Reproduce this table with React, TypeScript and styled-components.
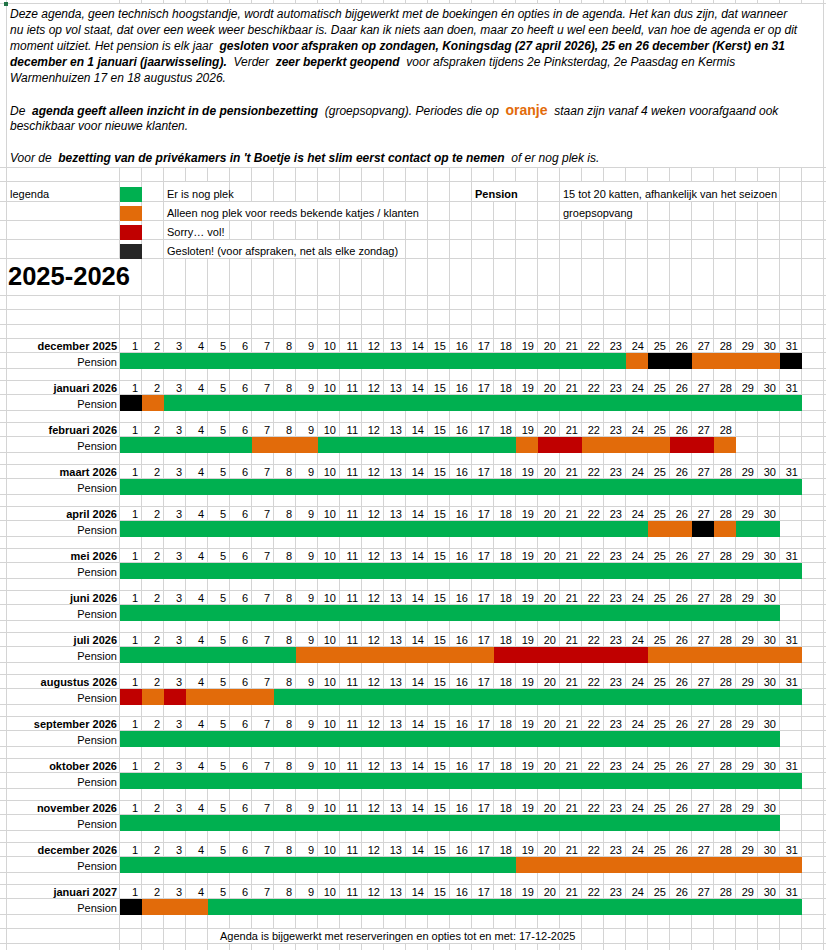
import React from "react";
import styled, { createGlobalStyle } from "styled-components";

const GRID = "#d4d4d4";
const COLS = "7px 113px repeat(33, 22px)";
const LAST_COL = 35;

const COLORS: Record<string, string> = {
  g: "#00b050",
  o: "#e26b0a",
  r: "#c00000",
  k: "#000000",
};

const Global = createGlobalStyle`
  html, body { margin: 0; padding: 0; background: #ffffff; }
  body { font-family: "Liberation Sans", Arial, sans-serif; color: #000; }
`;

const Sheet = styled.div`
  position: relative;
  width: 826px;
  height: 950px;
  overflow: hidden;
  background: #ffffff;
`;

const Marker = styled.div`
  position: absolute;
  left: 4px;
  top: 2px;
  width: 4px;
  height: 4px;
  background: #217346;
`;

const Row = styled.div<{ $h: number }>`
  display: grid;
  grid-template-columns: ${COLS};
  width: 846px;
  height: ${(p) => p.$h}px;
`;

const Cell = styled.div<{ $col?: number; $span?: number }>`
  box-sizing: border-box;
  min-width: 0;
  border-right: 1px solid ${GRID};
  border-bottom: 1px solid ${GRID};
  display: flex;
  align-items: flex-end;
  font-size: 11px;
  line-height: 11px;
  white-space: nowrap;
  ${(p) => (p.$col ? `grid-column: ${p.$col} / span ${p.$span ?? 1};` : "")}
`;

const TextBox = styled.div`
  grid-column: 2 / span 33;
  box-sizing: border-box;
  border-right: 1px solid ${GRID};
  border-bottom: 1px solid ${GRID};
  padding: 2px 0 0 3px;
  font-size: 12px;
  font-style: italic;
  line-height: 16px;
`;

const TextLine = styled.div`
  height: 16px;
  white-space: pre;
`;

const Strong = styled.span`
  font-weight: bold;
`;

const OrangeWord = styled.span`
  font-weight: bold;
  font-style: normal;
  font-size: 14px;
  color: #e26b0a;
`;

const LegendText = styled(Cell)<{ $bold?: boolean }>`
  padding: 0 0 1px 3px;
  font-weight: ${(p) => (p.$bold ? "bold" : "normal")};
`;

const SwatchCell = styled(Cell)`
  align-items: flex-end;
`;

const SwatchFill = styled.div<{ $color: string }>`
  width: calc(100% + 1px);
  height: 15px;
  margin: 0 -1px -1px 0;
  background: ${(p) => p.$color};
`;

const TitleCell = styled(Cell)`
  grid-column: 2 / span 2;
  font-size: 25.5px;
  font-weight: bold;
  line-height: 1;
  padding: 0 0 6px 1px;
`;

const LabelCell = styled(Cell)<{ $bold?: boolean }>`
  justify-content: flex-end;
  padding-right: 2px;
  font-weight: ${(p) => (p.$bold ? "bold" : "normal")};
`;

const DayCell = styled(Cell)`
  justify-content: flex-end;
  padding-right: 3px;
`;

const Segment = styled.div<{ $color: string; $col: number; $span: number }>`
  grid-column: ${(p) => p.$col} / span ${(p) => p.$span};
  background: ${(p) => p.$color};
`;

const FooterText = styled(Cell)`
  padding: 0 0 1px 12px;
`;

function blanks(from: number, to: number, prefix: string) {
  const out: React.ReactNode[] = [];
  for (let c = from; c <= to; c++) out.push(<Cell key={`${prefix}-${c}`} $col={c} />);
  return out;
}

type Seg = [string, number];
type Month = { name: string; days: number; segs: Seg[] };

const MONTHS: Month[] = [
  { name: "december 2025", days: 31, segs: [["g", 23], ["o", 1], ["k", 2], ["o", 4], ["k", 1]] },
  { name: "januari 2026", days: 31, segs: [["k", 1], ["o", 1], ["g", 29]] },
  { name: "februari 2026", days: 28, segs: [["g", 6], ["o", 3], ["g", 9], ["o", 1], ["r", 2], ["o", 4], ["r", 2], ["o", 1]] },
  { name: "maart 2026", days: 31, segs: [["g", 31]] },
  { name: "april 2026", days: 30, segs: [["g", 24], ["o", 2], ["k", 1], ["o", 1], ["g", 2]] },
  { name: "mei 2026", days: 31, segs: [["g", 31]] },
  { name: "juni 2026", days: 30, segs: [["g", 30]] },
  { name: "juli 2026", days: 31, segs: [["g", 8], ["o", 9], ["r", 7], ["o", 7]] },
  { name: "augustus 2026", days: 31, segs: [["r", 1], ["o", 1], ["r", 1], ["o", 4], ["g", 24]] },
  { name: "september 2026", days: 30, segs: [["g", 30]] },
  { name: "oktober 2026", days: 31, segs: [["g", 31]] },
  { name: "november 2026", days: 30, segs: [["g", 30]] },
  { name: "december 2026", days: 31, segs: [["g", 18], ["o", 13]] },
  { name: "januari 2027", days: 31, segs: [["k", 1], ["o", 3], ["g", 27]] },
];

type LegendItem = {
  color: string;
  label?: string;
  text: string;
  span: number;
  extra?: { bold?: string; boldSpan?: number; text: string; span: number };
};

const LEGEND: { h: number; item: LegendItem }[] = [
  {
    h: 19.5,
    item: {
      color: "#00b050",
      label: "legenda",
      text: "Er is nog plek",
      span: 3,
      extra: { bold: "Pension", boldSpan: 3, text: "15 tot 20 katten, afhankelijk van het seizoen", span: 10 },
    },
  },
  {
    h: 19,
    item: {
      color: "#e26b0a",
      text: "Alleen nog plek voor reeds bekende katjes / klanten",
      span: 12,
      extra: { text: "groepsopvang", span: 4 },
    },
  },
  { h: 19.5, item: { color: "#c00000", text: "Sorry… vol!", span: 3 } },
  { h: 19, item: { color: "#262626", text: "Gesloten! (voor afspraken, net als elke zondag)", span: 11 } },
];

function LegendRow({ h, item, idx }: { h: number; item: LegendItem; idx: number }) {
  const k = `lg${idx}`;
  const textEnd = 5 + item.span - 1;
  const cells: React.ReactNode[] = [];
  cells.push(<Cell key={`${k}-a`} $col={1} />);
  cells.push(
    <LegendText key={`${k}-b`} $col={2}>
      {item.label ?? ""}
    </LegendText>
  );
  cells.push(
    <SwatchCell key={`${k}-c`} $col={3}>
      <SwatchFill $color={item.color} />
    </SwatchCell>
  );
  cells.push(<Cell key={`${k}-d`} $col={4} />);
  cells.push(
    <LegendText key={`${k}-t`} $col={5} $span={item.span}>
      {item.text}
    </LegendText>
  );
  if (item.extra) {
    const ex = item.extra;
    cells.push(...blanks(textEnd + 1, 18, k));
    if (ex.bold) {
      cells.push(
        <LegendText key={`${k}-pb`} $col={19} $span={ex.boldSpan} $bold>
          {ex.bold}
        </LegendText>
      );
      cells.push(...blanks(19 + (ex.boldSpan ?? 1), 22, `${k}z`));
    } else {
      cells.push(...blanks(19, 22, `${k}x`));
    }
    cells.push(
      <LegendText key={`${k}-e`} $col={23} $span={ex.span}>
        {ex.text}
      </LegendText>
    );
    cells.push(...blanks(23 + ex.span, LAST_COL, `${k}y`));
  } else {
    cells.push(...blanks(textEnd + 1, LAST_COL, k));
  }
  return <Row $h={h}>{cells}</Row>;
}

function MonthBlock({ m, idx, last }: { m: Month; idx: number; last: boolean }) {
  const k = `m${idx}`;
  const days: React.ReactNode[] = [];
  for (let d = 1; d <= m.days; d++) {
    days.push(
      <DayCell key={`${k}-d${d}`} $col={2 + d}>
        {d}
      </DayCell>
    );
  }
  let col = 3;
  const segs = m.segs.map(([c, n], i) => {
    const el = <Segment key={`${k}-s${i}`} $color={COLORS[c]} $col={col} $span={n} />;
    col += n;
    return el;
  });
  return (
    <>
      <Row $h={14}>
        <Cell $col={1} />
        <LabelCell $col={2} $bold>
          {m.name}
        </LabelCell>
        {days}
        {blanks(3 + m.days, LAST_COL, `${k}h`)}
      </Row>
      <Row $h={16}>
        <Cell $col={1} />
        <LabelCell $col={2}>Pension</LabelCell>
        {segs}
        {blanks(3 + m.days, LAST_COL, `${k}p`)}
      </Row>
      <Row $h={last ? 14 : 12}>{blanks(1, LAST_COL, `${k}b`)}</Row>
    </>
  );
}

export default function App() {
  return (
    <>
      <Global />
      <Sheet>
        <Row $h={4}>{blanks(1, LAST_COL, "top")}</Row>
        <Row $h={164}>
          <Cell $col={1} />
          <TextBox>
            <TextLine>
              Deze agenda, geen technisch hoogstandje, wordt automatisch bijgewerkt met de boekingen én opties in de agenda. Het kan dus zijn, dat wanneer
            </TextLine>
            <TextLine>
              nu iets op vol staat, dat over een week weer beschikbaar is. Daar kan ik niets aan doen, maar zo heeft u wel een beeld, van hoe de agenda er op dit
            </TextLine>
            <TextLine>
              {"moment uitziet. Het pension is elk jaar  "}
              <Strong>gesloten voor afspraken op zondagen, Koningsdag (27 april 2026), 25 en 26 december (Kerst) en 31</Strong>
            </TextLine>
            <TextLine>
              <Strong>december en 1 januari (jaarwisseling).</Strong>
              {"  Verder  "}
              <Strong>zeer beperkt geopend</Strong>
              {"  voor afspraken tijdens 2e Pinksterdag, 2e Paasdag en Kermis"}
            </TextLine>
            <TextLine>Warmenhuizen 17 en 18 augustus 2026.</TextLine>
            <TextLine />
            <TextLine>
              {"De  "}
              <Strong>agenda geeft alleen inzicht in de pensionbezetting</Strong>
              {"  (groepsopvang). Periodes die op  "}
              <OrangeWord>oranje</OrangeWord>
              {"  staan zijn vanaf 4 weken voorafgaand ook"}
            </TextLine>
            <TextLine>beschikbaar voor nieuwe klanten.</TextLine>
            <TextLine />
            <TextLine>
              {"Voor de  "}
              <Strong>bezetting van de privékamers in 't Boetje is het slim eerst contact op te nemen</Strong>
              {"  of er nog plek is."}
            </TextLine>
          </TextBox>
          <Cell $col={35} />
        </Row>
        <Row $h={14}>{blanks(1, LAST_COL, "gap1")}</Row>
        {LEGEND.map((l, i) => (
          <LegendRow key={`legend-${i}`} h={l.h} item={l.item} idx={i} />
        ))}
        <Row $h={37}>
          <Cell $col={1} />
          <TitleCell>2025-2026</TitleCell>
          {blanks(4, LAST_COL, "title")}
        </Row>
        <Row $h={14}>{blanks(1, LAST_COL, "sp1")}</Row>
        <Row $h={15}>{blanks(1, LAST_COL, "sp2")}</Row>
        <Row $h={14}>{blanks(1, LAST_COL, "sp3")}</Row>
        {MONTHS.map((m, i) => (
          <MonthBlock key={m.name} m={m} idx={i} last={i === MONTHS.length - 1} />
        ))}
        <Row $h={15}>
          {blanks(1, 6, "ft")}
          <FooterText $col={7} $span={17}>
            Agenda is bijgewerkt met reserveringen en opties tot en met: 17-12-2025
          </FooterText>
          {blanks(24, LAST_COL, "ft2")}
        </Row>
        <Row $h={14}>{blanks(1, LAST_COL, "end")}</Row>
        <Marker />
      </Sheet>
    </>
  );
}
